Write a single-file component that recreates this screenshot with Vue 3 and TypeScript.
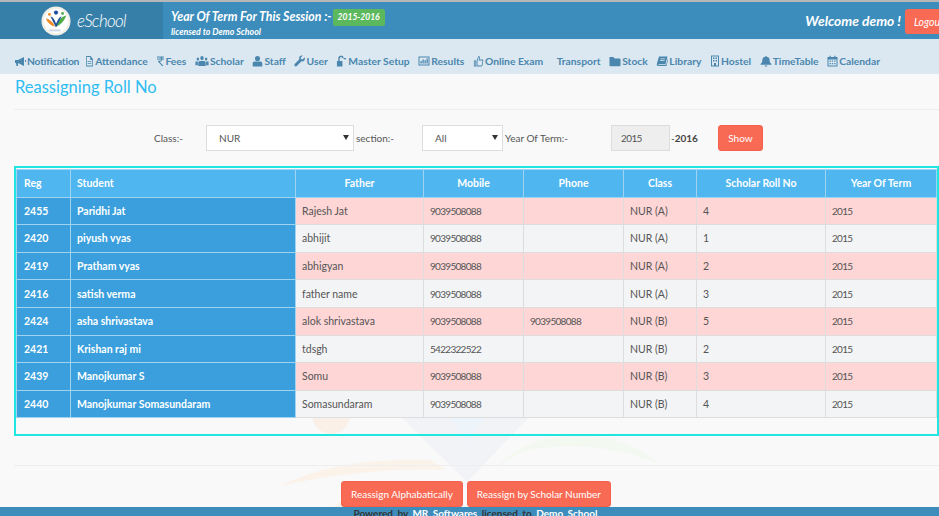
<script setup lang="ts">
interface NavItem {
  label: string
  width: number
  box?: number
  icon?: string
}

interface Row {
  reg: string
  student: string
  father: string
  mobile: string
  phone: string
  cls: string
  roll: string
  year: string
}

const navItems: NavItem[] = [
  { label: 'Notification', width: 12, icon: 'M1 5h3l6-3v9L4 8v3H2.500L2 8H1zM11 5h1v2h-1z' },
  { label: 'Attendance', width: 9, box: 12, icon: 'M1.500 1h6l3 3v7.500h-9zM2.500 2v8.500h7V5H7V2zM3.500 6h5v.8h-5zM3.500 8h5v.8h-5z' },
  { label: 'Fees', width: 8, icon: 'M1 1.500h7v1H5.800c.3.3.5.7.6 1.100H8v1H6.400C6.100 5.900 5 6.700 3.700 6.800L7.500 11H6L2 6.500V5.800h1.300c.9 0 1.700-.4 2-1.200H1v-1h4.300C5 2.900 4.300 2.500 3.300 2.500H1z' },
  { label: 'Scholar', width: 14, box: 17, icon: 'M8.500 1a2 2 0 1 1 0 4.200 2 2 0 0 1 0-4.200zM3.500 2.500a1.500 1.500 0 1 1 0 3.100 1.500 1.500 0 0 1 0-3.100zM13.500 2.500a1.500 1.500 0 1 1 0 3.100 1.500 1.500 0 0 1 0-3.100zM5.500 6h6c1 0 1.500 1 1.500 2v3H4V8c0-1 .5-2 1.500-2zM.5 6.500h3v3.800H.5zM13.500 6.500h3v3.800h-3z' },
  { label: 'Staff', width: 11, icon: 'M5.500 1a2.500 2.500 0 1 1 0 5.100 2.500 2.500 0 0 1 0-5.100zM2.500 6.500h6c1 0 1.800.9 1.800 2v3H.7v-3c0-1.100.8-2 1.800-2z' },
  { label: 'User', width: 11, icon: 'M10.500 2.500 8.400 4.600 7 4 6.800 2.600 8.900.6C7.200 0 5.400.8 5.200 2.600c-.1.600 0 1.100.2 1.600L.7 9c-.6.600-.4 1.500.1 2 .6.500 1.400.6 2 0l4.700-4.700c2 .6 3.900-1 3.300-3.800z' },
  { label: 'Master Setup', width: 11, box: 12, icon: 'M1 6h6v5.500H1zM2.500 6V4a3 3 0 0 1 6-.7h-1.500A1.500 1.500 0 0 0 4 4v2zM8.500 3h2.500v1.200H8.500z' },
  { label: 'Results', width: 12, icon: 'M.5 1.500h11v9H.5zM1.500 2.500v7h9v-7zM2.500 6h1.300v2.500H2.500zM4.500 4.500h1.300v4H4.500zM6.500 5.300h1.300v3.200H6.500zM8.500 3.500h1.300v5H8.500z' },
  { label: 'Online Exam', width: 11, box: 12, icon: 'M1 5.500h2.500v6H1zM1.900 6.300v4.400h.7V6.300zM4 5.500 6 1c1 0 1.500.7 1.500 1.500L7.200 4.500h3c.8 0 1.100.7 1 1.200l-.8 4.600c-.1.700-.6 1.200-1.200 1.200H4zM4.900 6v4.600h4.200c.3 0 .4-.2.500-.5l.7-4.200c0-.3-.1-.5-.3-.5H6.300l.4-2.800c0-.3-.1-.5-.3-.6z' },
  { label: 'Transport', width: 0 },
  { label: 'Stock', width: 12, icon: 'M.5 2h4l1 1.500h5.200c.4 0 .8.300.8.800v6.200c0 .4-.4.800-.8.800H1.300c-.5 0-.8-.4-.8-.8z' },
  { label: 'Library', width: 12, icon: 'M3 1.500h8.500L9.500 9H2.800c-.5 0-.6.5-.4.800h7.700l2-7 .4.500-2 7.700H2.200C1 11 .5 10 .8 9zM4.500 3.500v.8h4.500v-.8zM4 5.200V6h4.500v-.8z' },
  { label: 'Hostel', width: 10, icon: 'M1 .5h8v11H1zM2 1.500V10.500h6V1.500zM3 2.500h1.500V4H3zM5.500 2.500H7V4H5.500zM3 5h1.500v1.500H3zM5.500 5H7v1.500H5.500zM4 8h2v2.500H4z' },
  { label: 'TimeTable', width: 12, box: 11, icon: 'M5.500 1c.4 0 .7.300.7.700C8 2 8.800 3.300 8.800 5c0 2 .7 3.300 1.700 4v.8H.5V9c1-.7 1.700-2 1.700-4 0-1.700.8-3 2.600-3.300 0-.4.300-.7.700-.7zM4.200 10.500h2.600c0 .7-.6 1.200-1.300 1.200s-1.300-.5-1.300-1.200z' },
  { label: 'Calendar', width: 11, icon: 'M.5 2h2V.8h1.200V2h3.600V.8h1.200V2h2v9.500H.5zM1.500 4.500v6h8v-6zM2.500 5.500h1.300v1.300H2.500zM4.800 5.500h1.300v1.300H4.800zM7.200 5.500h1.300v1.300H7.200zM2.500 8h1.300v1.300H2.500zM4.800 8h1.300v1.300H4.800zM7.200 8h1.300v1.300H7.200z' },
]

const rows: Row[] = [
  { reg: '2455', student: 'Paridhi Jat', father: 'Rajesh Jat', mobile: '9039508088', phone: '', cls: 'NUR (A)', roll: '4', year: '2015' },
  { reg: '2420', student: 'piyush vyas', father: 'abhijit', mobile: '9039508088', phone: '', cls: 'NUR (A)', roll: '1', year: '2015' },
  { reg: '2419', student: 'Pratham vyas', father: 'abhigyan', mobile: '9039508088', phone: '', cls: 'NUR (A)', roll: '2', year: '2015' },
  { reg: '2416', student: 'satish verma', father: 'father name', mobile: '9039508088', phone: '', cls: 'NUR (A)', roll: '3', year: '2015' },
  { reg: '2424', student: 'asha shrivastava', father: 'alok shrivastava', mobile: '9039508088', phone: '9039508088', cls: 'NUR (B)', roll: '5', year: '2015' },
  { reg: '2421', student: 'Krishan raj mi', father: 'tdsgh', mobile: '5422322522', phone: '', cls: 'NUR (B)', roll: '2', year: '2015' },
  { reg: '2439', student: 'Manojkumar S', father: 'Somu', mobile: '9039508088', phone: '', cls: 'NUR (B)', roll: '3', year: '2015' },
  { reg: '2440', student: 'Manojkumar Somasundaram', father: 'Somasundaram', mobile: '9039508088', phone: '', cls: 'NUR (B)', roll: '4', year: '2015' },
]

const colWidths = [54, 225, 128, 100, 100, 73, 129, 111]
</script>

<template>
  <div class="page">
    <svg class="watermark" viewBox="0 0 939 516" aria-hidden="true">
      <circle cx="331" cy="415" r="19" fill="#fbf0e8" />
      <path d="M280 486C320 466 370 458 430 460L445 470C390 468 335 474 280 486Z" fill="#fbf3ea" />
      <path d="M493 470C520 440 560 432 600 437C625 441 645 452 660 464C620 447 570 442 530 450C515 454 503 462 493 470Z" fill="#f3f8f1" />
      <path d="M400 416H530L467 482Z" fill="#f2f3f7" />
      <path d="M448 416H486L467 443Z" fill="#eef5fa" />
      <path d="M330 516C333 503 345 497 360 498C348 502 342 508 340 516Z" fill="#fbf1e8" />
    </svg>

    <header class="topbar">
      <div class="brand">
        <svg class="brand__logo" viewBox="0 0 32 32" aria-hidden="true">
          <circle cx="16" cy="16" r="15.500" fill="#f1efe6" />
          <circle cx="16" cy="16" r="13" fill="#fff" />
          <path d="M5 13c4 1 8 4 10 9-4-1-8-4-10-9z" fill="#f08a24" />
          <path d="M27 10c-5 1-9 5-11 12 5-2 9-6 11-12z" fill="#4fae4a" />
          <path d="M10 11c3 1 5 4 6 8 2-4 3-7 6-8-2 4-4 8-6 12-2-4-4-8-6-12z" fill="#1f4e9c" />
          <circle cx="16" cy="7" r="2.200" fill="#1f4e9c" />
          <circle cx="9" cy="9" r="1.500" fill="#f08a24" />
          <circle cx="23" cy="8" r="1.500" fill="#4fae4a" />
          <path d="M9 25h12v2H9z" fill="#c9d6e8" />
        </svg>
        <span class="brand__name">eSchool</span>
      </div>
      <div class="session">
        <div class="session__line">
          Year Of Term For This Session :-<span class="session__badge">2015-2016</span>
        </div>
        <div class="session__license">licensed to Demo School</div>
      </div>
      <div class="welcome">Welcome demo !</div>
      <button type="button" class="logout">Logout</button>
    </header>

    <nav class="nav">
      <a
        v-for="item in navItems"
        :key="item.label"
        class="nav__item"
        :class="{ 'nav__item--plain': !item.icon }"
      >
        <svg
          v-if="item.icon"
          class="nav__icon"
          :width="item.width"
          height="12"
          :viewBox="`0 0 ${item.box ?? item.width} 12`"
          preserveAspectRatio="none"
          aria-hidden="true"
        >
          <path :d="item.icon" fill="#4a86ad" fill-rule="evenodd" />
        </svg>
        {{ item.label }}
      </a>
    </nav>

    <main class="content">
      <h1 class="title">Reassigning Roll No</h1>
      <hr class="rule" />

      <form class="filters" @submit.prevent>
        <label class="filters__class">Class:-</label>
        <span class="select select--class">NUR</span>
        <label>section:-</label>
        <span class="select select--section">All</span>
        <label>Year Of Term:-</label>
        <span class="year-input">2015</span>
        <span class="year-end">-<b>2016</b></span>
        <button type="button" class="btn btn--show">Show</button>
      </form>

      <div class="table-box">
        <table class="grid">
          <colgroup>
            <col v-for="(w, i) in colWidths" :key="i" :style="{ width: w + 'px' }" />
          </colgroup>
          <thead>
            <tr>
              <th class="left">Reg</th>
              <th class="left">Student</th>
              <th>Father</th>
              <th>Mobile</th>
              <th>Phone</th>
              <th>Class</th>
              <th>Scholar Roll No</th>
              <th>Year Of Term</th>
            </tr>
          </thead>
          <tbody>
            <tr v-for="row in rows" :key="row.reg">
              <td class="key">{{ row.reg }}</td>
              <td class="key">{{ row.student }}</td>
              <td>{{ row.father }}</td>
              <td class="num">{{ row.mobile }}</td>
              <td class="num">{{ row.phone }}</td>
              <td>{{ row.cls }}</td>
              <td>{{ row.roll }}</td>
              <td class="num">{{ row.year }}</td>
            </tr>
          </tbody>
        </table>
      </div>

      <hr class="rule rule--low" />

      <div class="actions">
        <button type="button" class="btn">Reassign Alphabatically</button>
        <button type="button" class="btn">Reassign by Scholar Number</button>
      </div>
    </main>

    <footer class="footer">
      Powered by <span class="footer__em">MR Softwares</span> licensed to <span class="footer__em">Demo School</span>
    </footer>
  </div>
</template>

<style>
html,
body {
  margin: 0;
  overflow: hidden;
}
</style>

<style scoped>
.page {
  position: relative;
  width: 939px;
  height: 516px;
  overflow: hidden;
  background: #f9f9f9;
  font-family: Lato, "Open Sans", sans-serif;
  font-size: 10.500px;
  color: #555;
}

.watermark {
  position: absolute;
  left: 0;
  top: 0;
  width: 939px;
  height: 516px;
}

.topbar {
  position: relative;
  display: flex;
  align-items: flex-start;
  height: 37px;
  border-top: 2px solid #b5b7b8;
  background: #3c8dbc;
  color: #fff;
}

.brand {
  display: flex;
  align-items: center;
  width: 163px;
  height: 37px;
  padding-left: 41px;
  box-sizing: border-box;
  background: #367fa9;
}

.brand__logo {
  width: 30px;
  height: 30px;
}

.brand__name {
  margin-left: 6px;
  font-family: Lato, sans-serif;
  font-size: 17px;
  font-style: italic;
  font-weight: 300;
  letter-spacing: -0.7px;
}

.session {
  margin-left: 8px;
  padding-top: 6px;
  font-style: italic;
  font-weight: 700;
}

.session__line {
  display: flex;
  align-items: flex-start;
  height: 18px;
  line-height: 18px;
  font-size: 12.300px;
}

.session__badge {
  margin: 1px 0 0 1px;
  padding: 0 5px;
  height: 17px;
  line-height: 17px;
  border-radius: 2px;
  background: #5cb85c;
  font-size: 8.500px;
}

.session__license {
  line-height: 11px;
  font-size: 8.800px;
}

.welcome {
  margin-left: auto;
  padding-top: 10px;
  font-size: 13.800px;
  font-style: italic;
  font-weight: 700;
}

.logout {
  flex: none;
  width: 50px;
  height: 25px;
  margin: 7px -16px 0 4px;
  padding: 0 0 0 9px;
  border: 0;
  border-radius: 3px;
  background: #f96a55;
  color: #fff;
  font: italic 400 10.500px Lato, sans-serif;
  text-align: left;
}

.nav {
  display: flex;
  align-items: center;
  height: 35px;
  padding: 8px 0 0 14px;
  box-sizing: border-box;
  background: #dbe8f2;
  font-size: 10.300px;
  font-weight: 700;
  color: #4a86ad;
  white-space: nowrap;
}

.nav__item {
  display: flex;
  align-items: center;
  gap: 1px;
  margin-right: 8.600px;
}

.nav__item:first-child {
  margin-right: 6px;
  letter-spacing: -0.2px;
}

.nav__item--plain {
  margin-left: 5px;
}

.nav__icon {
  flex: none;
}

.content {
  position: relative;
  padding: 0 0 0 14px;
}

.title {
  margin: 2px 0 0 1px;
  font-size: 16.500px;
  line-height: 22px;
  font-weight: 400;
  color: #2fbdf2;
}

.rule {
  margin: 11px 0 0;
  border: 0;
  border-top: 1px solid #eee;
}

.rule--low {
  margin-top: 29px;
}

.filters {
  display: flex;
  align-items: center;
  height: 26px;
  margin-top: 15px;
  padding-left: 140px;
  font-size: 10px;
  color: #555;
}

.filters__class {
  width: 52px;
}

.select {
  position: relative;
  box-sizing: border-box;
  height: 26px;
  line-height: 24px;
  padding-left: 12px;
  border: 1px solid #ddd;
  background: #fff;
}

.select::after {
  content: "";
  position: absolute;
  right: 4px;
  top: 9px;
  border: 3px solid transparent;
  border-top: 5px solid #333;
}

.select--class {
  width: 148px;
  margin-right: 2px;
}

.select--section {
  width: 81px;
  margin: 0 2px 0 28px;
}

.year-input {
  box-sizing: border-box;
  width: 59px;
  height: 26px;
  line-height: 24px;
  margin-left: 43px;
  padding-left: 9px;
  border: 1px solid #ddd;
  background: #eee;
  letter-spacing: -0.6px;
}

.year-end {
  margin-left: 1px;
  color: #444;
}

.btn {
  height: 26px;
  padding: 0 9px;
  border: 1px solid #f4614c;
  border-radius: 3px;
  background: #f96a55;
  color: #fff;
  font: 400 10px Lato, sans-serif;
}

.btn--show {
  margin-left: 20px;
  width: 45px;
  padding: 0;
}

.table-box {
  box-sizing: border-box;
  width: 925px;
  height: 270px;
  margin-top: 15px;
  padding-top: 1px;
  border: 2px solid #1fe6de;
}

.grid {
  width: 920px;
  table-layout: fixed;
  border-collapse: collapse;
}

.grid th,
.grid td {
  height: 27.600px;
  padding: 0 6px;
  box-sizing: border-box;
  border: 1px solid #ddd;
  overflow: hidden;
  white-space: nowrap;
}

.grid td.num {
  font-size: 10px;
  letter-spacing: -0.7px;
}

.grid th {
  background: #4fb6ef;
  border-color: #9fd3f2;
  color: #fff;
  font-weight: 700;
  text-align: center;
}

.grid th.left {
  text-align: left;
}

.grid tr > :first-child {
  padding-left: 7px;
}

.grid tbody tr:nth-child(odd) td {
  background: #ffd6d6;
}

.grid tbody tr:nth-child(even) td {
  background: #f3f4f6;
}

.grid tbody tr td.key {
  background: #3a9fdc;
  border-color: #9fd3f2;
  color: #fff;
  font-weight: 700;
}

.actions {
  display: flex;
  justify-content: center;
  gap: 4px;
  margin-top: 15px;
  padding-right: 1px;
}

.footer {
  position: relative;
  height: 9px;
  padding-left: 12px;
  background: #3c8dbc;
  color: #333;
  font-size: 10px;
  font-weight: 700;
  line-height: 12px;
  text-align: center;
  word-spacing: 2px;
}

.footer__em {
  color: #fff;
}
</style>
